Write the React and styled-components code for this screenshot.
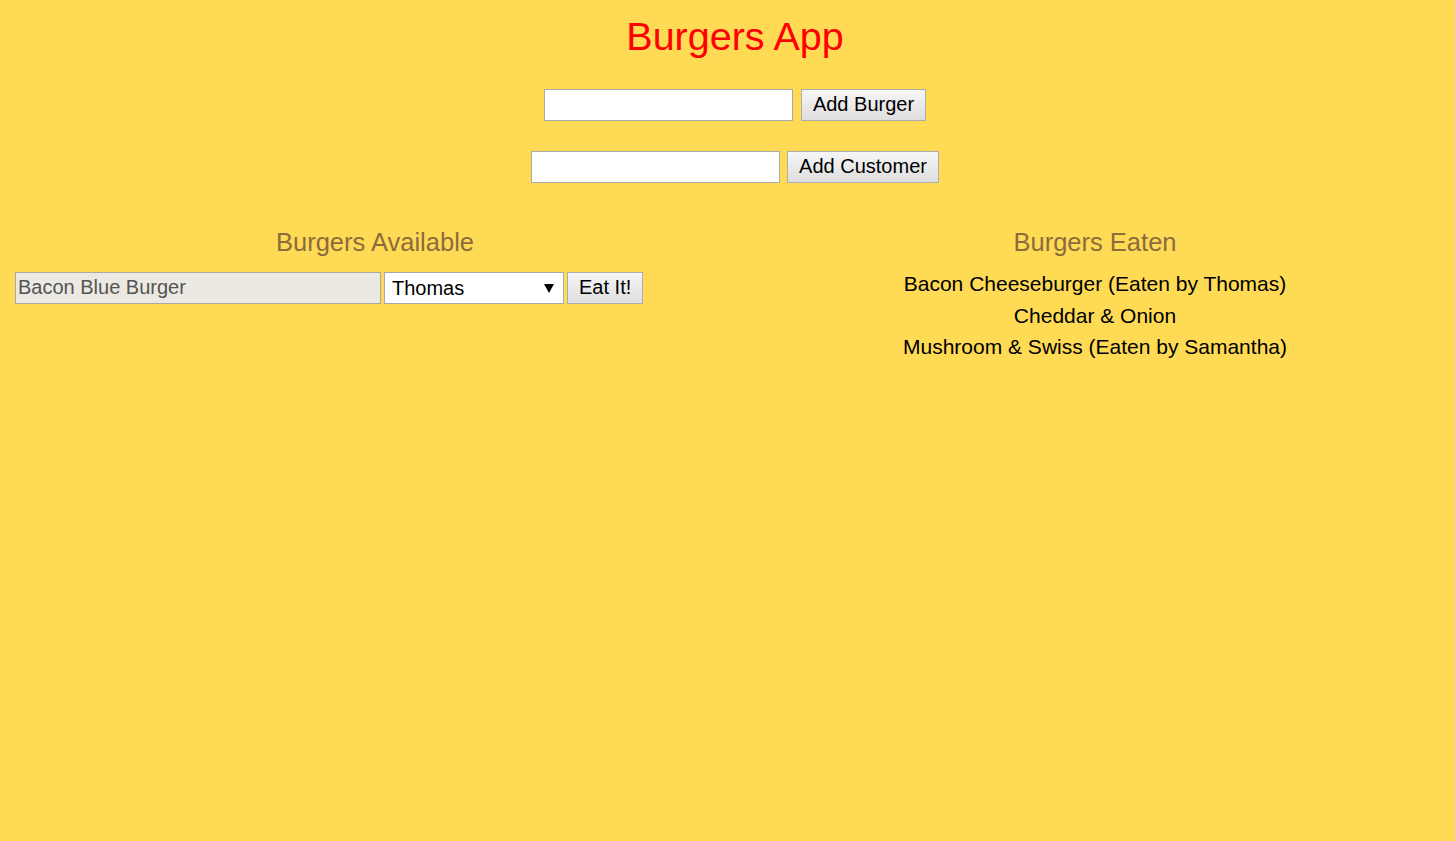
import React from "react";
import styled, { createGlobalStyle } from "styled-components";

const Global = createGlobalStyle`
  html, body { margin: 0; padding: 0; background: #ffda55; }
  body { font-family: "Liberation Sans", Arial, sans-serif; color: #000; }
`;

const Page = styled.div`
  min-height: 841px;
  padding-left: 15px;
  box-sizing: border-box;
  width: 1455px;
`;

const Title = styled.h1`
  margin: 13px 0 0;
  font-size: 39.5px;
  line-height: 46px;
  font-weight: normal;
  color: #ff0000;
  text-align: center;
`;

const FormRow = styled.form`
  display: flex;
  justify-content: center;
  gap: ${(p) => p.$gap || 8}px;
  margin-top: ${(p) => p.$top}px;
`;

const TextInput = styled.input`
  box-sizing: border-box;
  width: ${(p) => p.$w}px;
  height: 32px;
  border: 1px solid #a9a9a9;
  background: ${(p) => (p.disabled ? "#ebe9e1" : "#fff")};
  color: #545454;
  font-family: "Liberation Sans", Arial, sans-serif;
  font-size: 20px;
  padding: 0 2px 1px;
  margin: 0;
  outline: none;
`;

const Button = styled.button`
  box-sizing: border-box;
  height: 32px;
  padding: 0 11px 2px;
  border: 1px solid #adadad;
  border-radius: 0;
  background: linear-gradient(#f6f6f6, #dedede);
  font-family: "Liberation Sans", Arial, sans-serif;
  font-size: 20px;
  color: #000;
  margin: 0;
`;

const Columns = styled.div`
  display: grid;
  grid-template-columns: 720px 720px;
  margin-top: 45px;
`;

const Column = styled.section`
  display: flex;
  flex-direction: column;
  align-items: ${(p) => (p.$center ? "center" : "stretch")};
`;

const Heading = styled.h3`
  margin: 0;
  font-size: 25.5px;
  line-height: 28px;
  font-weight: normal;
  color: #8c6b3d;
  text-align: center;
`;

const EatRow = styled.form`
  display: flex;
  gap: 3px;
  margin-top: 16px;
`;

const SelectWrap = styled.div`
  position: relative;
  width: 180px;
  height: 32px;
`;

const Select = styled.select`
  appearance: none;
  -webkit-appearance: none;
  box-sizing: border-box;
  width: 100%;
  height: 100%;
  border: 1px solid #a9a9a9;
  border-radius: 0;
  background: #fff;
  font-family: "Liberation Sans", Arial, sans-serif;
  font-size: 20px;
  color: #000;
  padding: 0 0 1px 7px;
  margin: 0;
  outline: none;
`;

const Arrow = styled.svg`
  position: absolute;
  right: 10px;
  top: 12px;
  pointer-events: none;
`;

const EatenList = styled.ul`
  list-style: none;
  margin: 12px 0 0;
  padding: 0;
  text-align: center;
`;

const EatenItem = styled.li`
  font-size: 21px;
  line-height: 31.5px;
  color: #000;
`;

export default function App() {
  const eaten = [
    "Bacon Cheeseburger (Eaten by Thomas)",
    "Cheddar & Onion",
    "Mushroom & Swiss (Eaten by Samantha)",
  ];
  return (
    <Page>
      <Global />
      <Title>Burgers App</Title>
      <FormRow $top={30} $gap={8} onSubmit={(e) => e.preventDefault()}>
        <TextInput $w={249} type="text" />
        <Button type="submit">Add Burger</Button>
      </FormRow>
      <FormRow $top={30} $gap={7} onSubmit={(e) => e.preventDefault()}>
        <TextInput $w={249} type="text" />
        <Button type="submit">Add Customer</Button>
      </FormRow>
      <Columns>
        <Column>
          <Heading>Burgers Available</Heading>
          <EatRow onSubmit={(e) => e.preventDefault()}>
            <TextInput $w={366} disabled defaultValue="Bacon Blue Burger" />
            <SelectWrap>
              <Select defaultValue="Thomas">
                <option>Thomas</option>
                <option>Samantha</option>
              </Select>
              <Arrow width="10" height="9" viewBox="0 0 10 9">
                <path d="M0 0 H10 L5 9 Z" fill="#000" />
              </Arrow>
            </SelectWrap>
            <Button type="submit">Eat It!</Button>
          </EatRow>
        </Column>
        <Column $center>
          <Heading>Burgers Eaten</Heading>
          <EatenList>
            {eaten.map((b) => (
              <EatenItem key={b}>{b}</EatenItem>
            ))}
          </EatenList>
        </Column>
      </Columns>
    </Page>
  );
}
